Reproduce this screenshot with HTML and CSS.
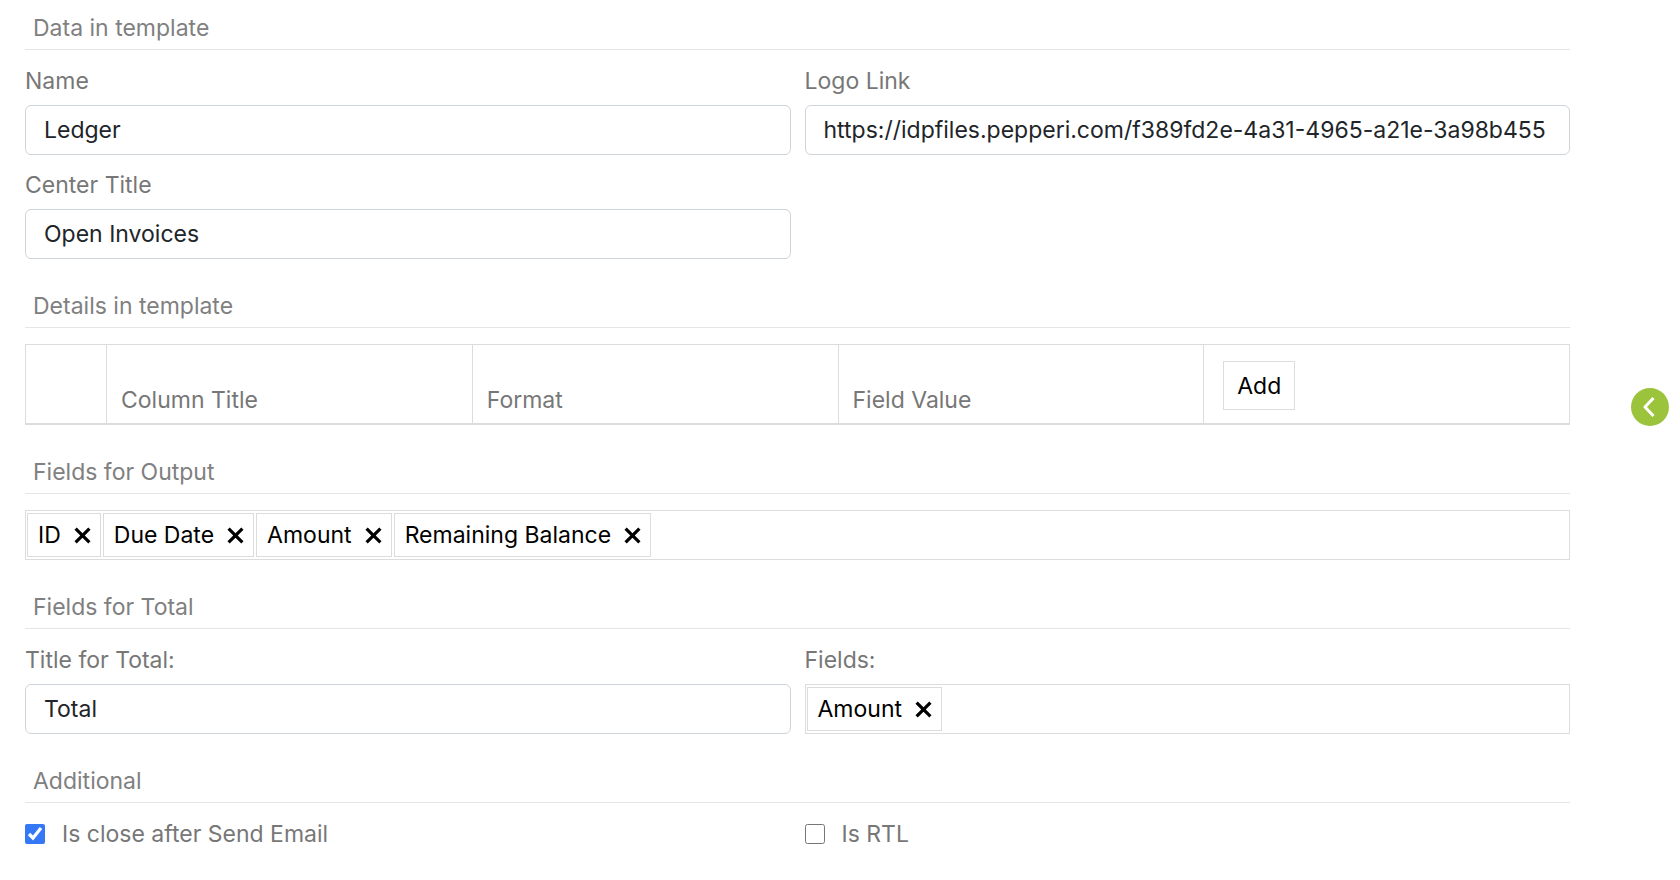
FILE: index.html
```html
<!DOCTYPE html>
<html lang="en">

<head>
    <meta charset="UTF-8">
    <meta name="viewport" content="width=device-width, initial-scale=1.0">
    <title>Template</title>
    <link rel="stylesheet" href="styles.css">
</head>

<body>
    <svg class="sprite" aria-hidden="true">
        <symbol id="times" viewBox="0 0 17 17">
            <path d="M1.6 1.6L15.4 15.4M15.4 1.6L1.6 15.4" fill="none" stroke="currentColor" stroke-width="3.2" />
        </symbol>
    </svg>

    <form class="template">
        <section>
            <h2>Data in template</h2>
            <div class="row">
                <div class="field">
                    <label for="name">Name</label>
                    <input type="text" id="name" value="Ledger">
                </div>
                <div class="field">
                    <label for="logo">Logo Link</label>
                    <input type="text" id="logo" value="https://idpfiles.pepperi.com/f389fd2e-4a31-4965-a21e-3a98b455">
                </div>
                <div class="field">
                    <label for="center">Center Title</label>
                    <input type="text" id="center" value="Open Invoices">
                </div>
            </div>
        </section>

        <section>
            <h2>Details in template</h2>
            <table class="details">
                <thead>
                    <tr>
                        <th class="handle"></th>
                        <th>Column Title</th>
                        <th>Format</th>
                        <th>Field Value</th>
                        <th class="action"><button type="button" class="add">Add</button></th>
                    </tr>
                </thead>
            </table>
        </section>

        <section>
            <h2>Fields for Output</h2>
            <div class="chips">
                <span class="chip">ID<button type="button" aria-label="Remove"><svg><use href="#times" /></svg></button></span>
                <span class="chip">Due Date<button type="button" aria-label="Remove"><svg><use href="#times" /></svg></button></span>
                <span class="chip">Amount<button type="button" aria-label="Remove"><svg><use href="#times" /></svg></button></span>
                <span class="chip">Remaining Balance<button type="button" aria-label="Remove"><svg><use href="#times" /></svg></button></span>
            </div>
        </section>

        <section>
            <h2>Fields for Total</h2>
            <div class="row">
                <div class="field">
                    <label for="total">Title for Total:</label>
                    <input type="text" id="total" value="Total">
                </div>
                <div class="field">
                    <span class="label" id="fields">Fields:</span>
                    <div class="chips" role="group" aria-labelledby="fields">
                        <span class="chip">Amount<button type="button" aria-label="Remove"><svg><use href="#times" /></svg></button></span>
                    </div>
                </div>
            </div>
        </section>

        <section>
            <h2>Additional</h2>
            <div class="row">
                <div class="check">
                    <input type="checkbox" id="close" checked>
                    <label for="close">Is close after Send Email</label>
                </div>
                <div class="check">
                    <input type="checkbox" id="rtl">
                    <label for="rtl">Is RTL</label>
                </div>
            </div>
        </section>
    </form>

    <button type="button" class="toggle" aria-label="Open panel">
        <svg viewBox="0 0 38 38">
            <path d="M22.5 10L14 19L22.5 28" fill="none" stroke="#fff" stroke-width="3" stroke-linejoin="round" />
        </svg>
    </button>
</body>

</html>
```
FILE: styles.css
```css
* {
    box-sizing: border-box;
    margin: 0;
    padding: 0;
}

body {
    background: #fff;
    color: #777;
    font: 23px/30px Inter, "Liberation Sans", sans-serif;
}

input,
button {
    font: inherit;
}

button {
    background: none;
    border: 0;
    color: #000;
    cursor: pointer;
}

.sprite {
    display: none;
}

.template {
    display: flex;
    flex-direction: column;
    gap: 32px;
    padding: 13px 110px 20px 25px;
}

h2 {
    color: #808080;
    font-size: 23px;
    font-weight: 400;
    line-height: 30px;
    padding: 0 8px 6px;
    border-bottom: 1px solid #e5e5e5;
    margin-bottom: 16px;
}

.row {
    display: grid;
    grid-template-columns: 1fr 1fr;
    gap: 15px 14px;
}

.field {
    display: flex;
    flex-direction: column;
    gap: 9px;
    min-width: 0;
}

.field input {
    width: 100%;
    height: 50px;
    padding: 0 18px;
    border: 1px solid #ced4da;
    border-radius: 6px;
    background: #fff;
    color: #212529;
}

/* details table */
.details {
    width: 100%;
    table-layout: fixed;
    border-collapse: collapse;
    border: 1px solid #dcdcdc;
    border-bottom-width: 2px;
}

.details th {
    height: 79px;
    padding: 0 14px 8px;
    border-left: 1px solid #dcdcdc;
    font-weight: 400;
    text-align: left;
    vertical-align: bottom;
}

.details .handle {
    width: 81px;
}

.details .action {
    padding: 16px 19px 13px;
}

.add {
    display: block;
    height: 49px;
    padding: 0 13px;
    border: 1px solid #dcdcdc;
}

/* selected fields */
.chips {
    display: flex;
    align-items: center;
    gap: 2px;
    height: 50px;
    padding: 0 1px;
    border: 1px solid #dcdcdc;
}

.chip {
    display: flex;
    align-items: center;
    gap: 13px;
    height: 44px;
    padding: 0 9px 0 10px;
    border: 1px solid #dcdcdc;
    color: #000;
}

.chip svg {
    display: block;
    width: 17px;
    height: 17px;
}

/* checkboxes */
.check {
    display: flex;
    align-items: center;
    gap: 17px;
}

.check input {
    width: 20px;
    height: 20px;
    accent-color: #3478f6;
}

.toggle {
    position: fixed;
    top: 388px;
    right: 11px;
    width: 38px;
    height: 38px;
    border-radius: 50%;
    background: #9bc43c;
}

.toggle svg {
    display: block;
}
```
